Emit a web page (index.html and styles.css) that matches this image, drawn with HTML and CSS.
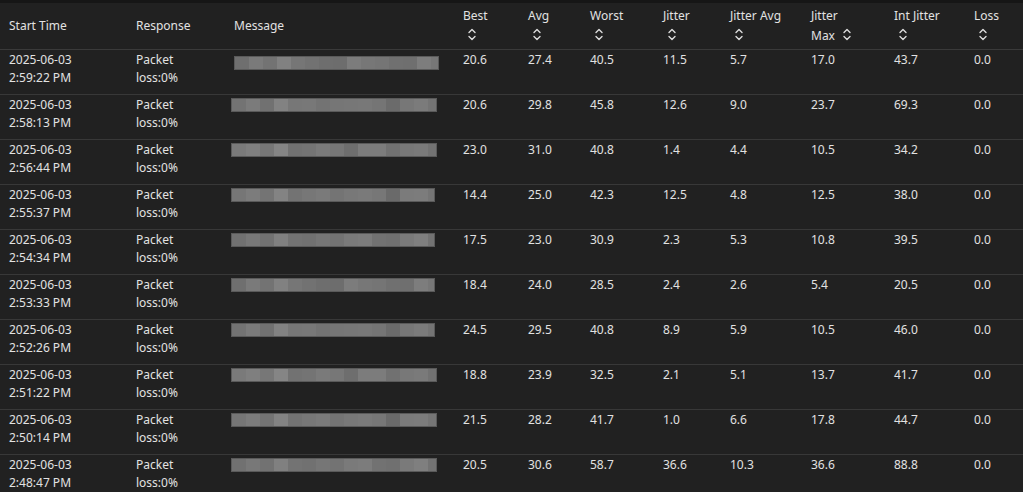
FILE: index.html
```html
<!DOCTYPE html>
<html>
<head>
<meta charset="utf-8">
<link rel="stylesheet" href="styles.css">
</head>
<body>
<div class="topbar"></div>
<table class="grid">
<colgroup>
<col class="c-time"><col class="c-resp"><col class="c-msg"><col class="c-best"><col class="c-avg"><col class="c-worst"><col class="c-jit"><col class="c-javg"><col class="c-jmax"><col class="c-int"><col class="c-loss">
</colgroup>
<thead>
<tr>
<th>Start Time</th>
<th>Response</th>
<th>Message</th>
<th>Best<br><svg class="sort" viewBox="0 0 8 13"><path d="M1 4.5L4 1.5L7 4.5M1 8.5L4 11.5L7 8.5"/></svg></th>
<th>Avg<br><svg class="sort" viewBox="0 0 8 13"><path d="M1 4.5L4 1.5L7 4.5M1 8.5L4 11.5L7 8.5"/></svg></th>
<th>Worst<br><svg class="sort" viewBox="0 0 8 13"><path d="M1 4.5L4 1.5L7 4.5M1 8.5L4 11.5L7 8.5"/></svg></th>
<th>Jitter<br><svg class="sort" viewBox="0 0 8 13"><path d="M1 4.5L4 1.5L7 4.5M1 8.5L4 11.5L7 8.5"/></svg></th>
<th>Jitter Avg<br><svg class="sort" viewBox="0 0 8 13"><path d="M1 4.5L4 1.5L7 4.5M1 8.5L4 11.5L7 8.5"/></svg></th>
<th>Jitter<br>Max <svg class="sort" viewBox="0 0 8 13"><path d="M1 4.5L4 1.5L7 4.5M1 8.5L4 11.5L7 8.5"/></svg></th>
<th>Int Jitter<br><svg class="sort" viewBox="0 0 8 13"><path d="M1 4.5L4 1.5L7 4.5M1 8.5L4 11.5L7 8.5"/></svg></th>
<th>Loss<br><svg class="sort" viewBox="0 0 8 13"><path d="M1 4.5L4 1.5L7 4.5M1 8.5L4 11.5L7 8.5"/></svg></th>
</tr>
</thead>
<tbody>
<tr><td>2025-06-03<br>2:59:22 PM</td><td>Packet<br>loss:0%</td><td><div class="blur b1 first"></div></td><td>20.6</td><td>27.4</td><td>40.5</td><td>11.5</td><td>5.7</td><td>17.0</td><td>43.7</td><td>0.0</td></tr>
<tr><td>2025-06-03<br>2:58:13 PM</td><td>Packet<br>loss:0%</td><td><div class="blur b2"></div></td><td>20.6</td><td>29.8</td><td>45.8</td><td>12.6</td><td>9.0</td><td>23.7</td><td>69.3</td><td>0.0</td></tr>
<tr><td>2025-06-03<br>2:56:44 PM</td><td>Packet<br>loss:0%</td><td><div class="blur b3"></div></td><td>23.0</td><td>31.0</td><td>40.8</td><td>1.4</td><td>4.4</td><td>10.5</td><td>34.2</td><td>0.0</td></tr>
<tr><td>2025-06-03<br>2:55:37 PM</td><td>Packet<br>loss:0%</td><td><div class="blur b4 short"></div></td><td>14.4</td><td>25.0</td><td>42.3</td><td>12.5</td><td>4.8</td><td>12.5</td><td>38.0</td><td>0.0</td></tr>
<tr><td>2025-06-03<br>2:54:34 PM</td><td>Packet<br>loss:0%</td><td><div class="blur b5 short"></div></td><td>17.5</td><td>23.0</td><td>30.9</td><td>2.3</td><td>5.3</td><td>10.8</td><td>39.5</td><td>0.0</td></tr>
<tr><td>2025-06-03<br>2:53:33 PM</td><td>Packet<br>loss:0%</td><td><div class="blur b1 short"></div></td><td>18.4</td><td>24.0</td><td>28.5</td><td>2.4</td><td>2.6</td><td>5.4</td><td>20.5</td><td>0.0</td></tr>
<tr><td>2025-06-03<br>2:52:26 PM</td><td>Packet<br>loss:0%</td><td><div class="blur b2 short"></div></td><td>24.5</td><td>29.5</td><td>40.8</td><td>8.9</td><td>5.9</td><td>10.5</td><td>46.0</td><td>0.0</td></tr>
<tr><td>2025-06-03<br>2:51:22 PM</td><td>Packet<br>loss:0%</td><td><div class="blur b3"></div></td><td>18.8</td><td>23.9</td><td>32.5</td><td>2.1</td><td>5.1</td><td>13.7</td><td>41.7</td><td>0.0</td></tr>
<tr><td>2025-06-03<br>2:50:14 PM</td><td>Packet<br>loss:0%</td><td><div class="blur b4"></div></td><td>21.5</td><td>28.2</td><td>41.7</td><td>1.0</td><td>6.6</td><td>17.8</td><td>44.7</td><td>0.0</td></tr>
<tr><td>2025-06-03<br>2:48:47 PM</td><td>Packet<br>loss:0%</td><td><div class="blur b5"></div></td><td>20.5</td><td>30.6</td><td>58.7</td><td>36.6</td><td>10.3</td><td>36.6</td><td>88.8</td><td>0.0</td></tr>
</tbody>
</table>
</body>
</html>
```
FILE: styles.css
```css
html, body {
  margin: 0;
  padding: 0;
  background: #212121;
  overflow: hidden;
}
body {
  font-family: "Noto Sans", "Open Sans", sans-serif;
  font-size: 12px;
  color: #e2e2e2;
}
.topbar {
  height: 3px;
  background: #161616;
}
.grid {
  width: 1023px;
  border-collapse: collapse;
  table-layout: fixed;
}
.c-time { width: 127px; }
.c-resp { width: 98px; }
.c-msg { width: 229px; }
.c-best { width: 65px; }
.c-avg { width: 62px; }
.c-worst { width: 73px; }
.c-jit { width: 67px; }
.c-javg { width: 81px; }
.c-jmax { width: 83px; }
.c-int { width: 80px; }
.c-loss { width: 58px; }

.grid th {
  height: 46px;
  padding: 0 0 0 9px;
  text-align: left;
  font-weight: 400;
  line-height: 20px;
  vertical-align: middle;
  white-space: nowrap;
  border-bottom: 1px solid #3a3a3a;
}
.sort {
  width: 8px;
  height: 13px;
  margin-left: 5px;
  vertical-align: -1px;
  fill: none;
  stroke: #dcdcdc;
  stroke-width: 1.4;
  stroke-linecap: round;
  stroke-linejoin: round;
}
.grid td {
  height: 45px;
  box-sizing: border-box;
  padding: 1px 0 0 9px;
  line-height: 18px;
  vertical-align: top;
  white-space: nowrap;
  border-bottom: 1px solid #383838;
}
.blur {
  width: 206px;
  height: 14px;
  margin: 2px 0 0 -3px;
  box-sizing: border-box;
  border: 1px solid #5a5a5a;
}
.blur.first {
  width: 205px;
  margin: 5px 0 0 0;
}
.blur.short {
  width: 204px;
}
.b1 {
  background: linear-gradient(90deg, #6f6f6f 0 14px, #7a7a7a 14px 28px, #737373 28px 42px, #818181 42px 56px, #767676 56px 70px, #727272 70px 84px, #6e6e6e 84px 98px, #6d6d6d 98px 112px, #7c7c7c 112px 126px, #777777 126px 140px, #757575 140px 154px, #707070 154px 168px, #6f6f6f 168px 182px, #7d7d7d 182px 196px, #777777 196px);
}
.b2 {
  background: linear-gradient(90deg, #737373 0 14px, #7b7b7b 14px 28px, #717171 28px 42px, #828282 42px 56px, #777777 56px 70px, #787878 70px 84px, #737373 84px 98px, #767676 98px 112px, #777777 112px 126px, #787878 126px 140px, #757575 140px 154px, #6b6b6b 154px 168px, #777777 168px 182px, #7b7b7b 182px 196px, #747474 196px);
}
.b3 {
  background: linear-gradient(90deg, #7a7a7a 0 14px, #7f7f7f 14px 28px, #777777 28px 42px, #858585 42px 56px, #727272 56px 70px, #747474 70px 84px, #7a7a7a 84px 98px, #777777 98px 112px, #6e6e6e 112px 126px, #7c7c7c 126px 140px, #7c7c7c 140px 154px, #717171 154px 168px, #787878 168px 182px, #7a7a7a 182px 196px, #727272 196px);
}
.b4 {
  background: linear-gradient(90deg, #767676 0 14px, #7c7c7c 14px 28px, #747474 28px 42px, #838383 42px 56px, #737373 56px 70px, #777777 70px 84px, #7a7a7a 84px 98px, #747474 98px 112px, #787878 112px 126px, #7a7a7a 126px 140px, #777777 140px 154px, #6a6a6a 154px 168px, #7b7b7b 168px 182px, #7c7c7c 182px 196px, #757575 196px);
}
.b5 {
  background: linear-gradient(90deg, #717171 0 14px, #787878 14px 28px, #727272 28px 42px, #808080 42px 56px, #737373 56px 70px, #717171 70px 84px, #767676 84px 98px, #737373 98px 112px, #7a7a7a 112px 126px, #7c7c7c 126px 140px, #727272 140px 154px, #707070 154px 168px, #7a7a7a 168px 182px, #7f7f7f 182px 196px, #737373 196px);
}
```
